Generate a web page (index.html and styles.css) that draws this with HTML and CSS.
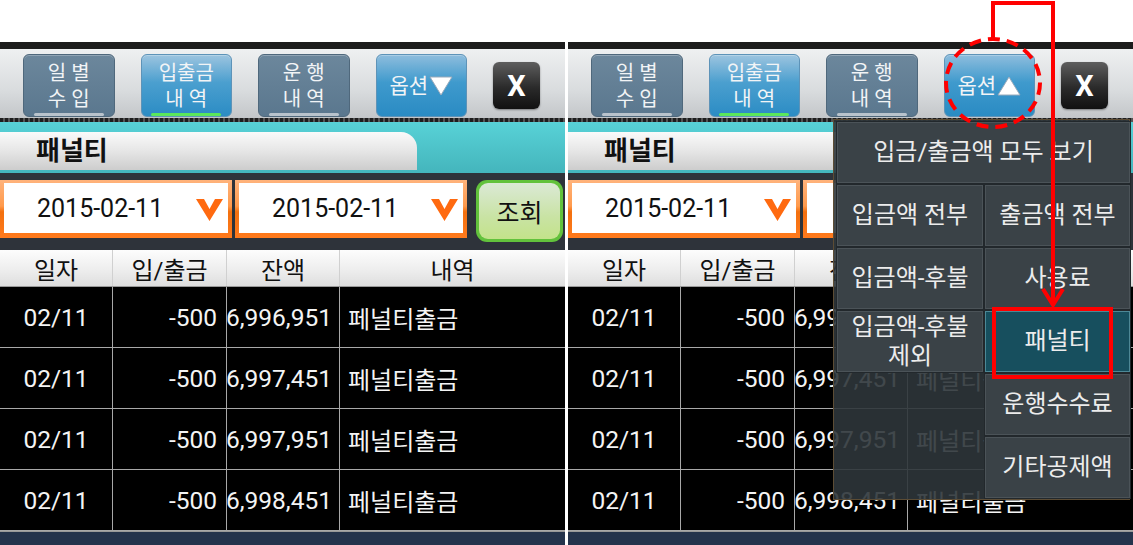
FILE: index.html
```html
<html>
<head>
  <title>패널티 조회 - 옵션 메뉴</title>
  <link rel="stylesheet" href="styles.css">
</head>
<body>
  <div class="screens">

    <!-- Left screen: normal state -->
    <div class="phone">
      <div class="status"></div>
      <div class="toolbar">
        <div class="tb-btn"><span>일 별</span><span>수 입</span><i class="bar"></i></div>
        <div class="tb-btn active"><span>입출금</span><span>내 역</span><i class="bar"></i></div>
        <div class="tb-btn"><span>운 행</span><span>내 역</span><i class="bar"></i></div>
        <div class="tb-btn option"><span>옵션</span><svg width="24" height="20" viewBox="0 0 24 20"><polygon points="1,1 23,1 12,19" fill="#fff" stroke="#9ab" stroke-width="1"/></svg></div>
        <div class="close-btn">X</div>
      </div>
      <div class="dots"></div>
      <div class="tabband"><div class="tab">패널티</div></div>
      <div class="filter">
        <div class="date"><div class="date-in"><span>2015-02-11</span><svg class="chev" width="27" height="22" viewBox="0 0 27 22"><polygon points="0,0 8,0 13.5,10 19,0 27,0 13.5,22" fill="#ff6a10"/></svg></div></div>
        <div class="date"><div class="date-in"><span>2015-02-11</span><svg class="chev" width="27" height="22" viewBox="0 0 27 22"><polygon points="0,0 8,0 13.5,10 19,0 27,0 13.5,22" fill="#ff6a10"/></svg></div></div>
        <div class="search"><div class="search-in">조회</div></div>
      </div>
      <div class="grid head"><div>일자</div><div>입/출금</div><div>잔액</div><div>내역</div></div>
      <div class="grid row"><div>02/11</div><div class="num">-500</div><div class="num">6,996,951</div><div class="desc">페널티출금</div></div>
      <div class="grid row"><div>02/11</div><div class="num">-500</div><div class="num">6,997,451</div><div class="desc">페널티출금</div></div>
      <div class="grid row"><div>02/11</div><div class="num">-500</div><div class="num">6,997,951</div><div class="desc">페널티출금</div></div>
      <div class="grid row"><div>02/11</div><div class="num">-500</div><div class="num">6,998,451</div><div class="desc">페널티출금</div></div>
      <div class="navbar"></div>
    </div>

    <!-- Right screen: option menu opened -->
    <div class="phone">
      <div class="status"></div>
      <div class="toolbar">
        <div class="tb-btn"><span>일 별</span><span>수 입</span><i class="bar"></i></div>
        <div class="tb-btn active"><span>입출금</span><span>내 역</span><i class="bar"></i></div>
        <div class="tb-btn"><span>운 행</span><span>내 역</span><i class="bar"></i></div>
        <div class="tb-btn option"><span>옵션</span><svg width="24" height="20" viewBox="0 0 24 20"><polygon points="12,1 23,19 1,19" fill="#fff" stroke="#9ab" stroke-width="1"/></svg></div>
        <div class="close-btn">X</div>
      </div>
      <div class="dots"></div>
      <div class="tabband"><div class="tab">패널티</div></div>
      <div class="filter">
        <div class="date"><div class="date-in"><span>2015-02-11</span><svg class="chev" width="27" height="22" viewBox="0 0 27 22"><polygon points="0,0 8,0 13.5,10 19,0 27,0 13.5,22" fill="#ff6a10"/></svg></div></div>
        <div class="date"><div class="date-in"><span>2015-02-11</span><svg class="chev" width="27" height="22" viewBox="0 0 27 22"><polygon points="0,0 8,0 13.5,10 19,0 27,0 13.5,22" fill="#ff6a10"/></svg></div></div>
        <div class="search"><div class="search-in">조회</div></div>
      </div>
      <div class="grid head"><div>일자</div><div>입/출금</div><div>잔액</div><div>내역</div></div>
      <div class="grid row"><div>02/11</div><div class="num">-500</div><div class="num">6,996,951</div><div class="desc">페널티출금</div></div>
      <div class="grid row"><div>02/11</div><div class="num">-500</div><div class="num">6,997,451</div><div class="desc">페널티출금</div></div>
      <div class="grid row"><div>02/11</div><div class="num">-500</div><div class="num">6,997,951</div><div class="desc">페널티출금</div></div>
      <div class="grid row"><div>02/11</div><div class="num">-500</div><div class="num">6,998,451</div><div class="desc">페널티출금</div></div>
      <div class="navbar"></div>

      <!-- Option popup menu -->
      <div class="menu">
        <div class="item wide">입금/출금액 모두 보기</div>
        <div class="item">입금액 전부</div>
        <div class="item">출금액 전부</div>
        <div class="item">입금액-후불</div>
        <div class="item">사용료</div>
        <div class="item two">입금액-후불<br>제외</div>
        <div class="item selected">패널티</div>
        <div class="empty"></div>
        <div class="item">운행수수료</div>
        <div class="empty"></div>
        <div class="item">기타공제액</div>
      </div>
    </div>
  </div>

  <!-- Red guide marks drawn over the screenshot -->
  <svg class="marks" width="1133" height="545" viewBox="0 0 1133 545">
    <polyline points="993,38 993,3 1053,3 1053,303" fill="none" stroke="#f00" stroke-width="4"/>
    <polyline points="1043,289 1053,305 1063,289" fill="none" stroke="#f00" stroke-width="4"/>
    <ellipse cx="993" cy="83" rx="47" ry="44" fill="none" stroke="#f00" stroke-width="4" stroke-dasharray="12 7"/>
    <rect x="994" y="309" width="117" height="68" fill="none" stroke="#f00" stroke-width="4"/>
  </svg>
</body>
</html>
```

FILE: styles.css
```css
/* Page */
body {
  margin: 0;
  background: #fff;
  font-family: Roboto, "Noto Sans CJK KR", sans-serif;
  width: 1133px;
  height: 545px;
  overflow: hidden;
  position: relative;
}

/* Two screenshots side by side */
.screens {
  display: flex;
  gap: 3px;
  padding-top: 42px;
}

.phone {
  width: 565px;
  position: relative;
  background: #000;
}

/* Thin status strip */
.status {
  height: 7px;
  background: #1c1c1c;
}

/* Top toolbar */
.toolbar {
  height: 63px;
  padding: 5px 0 1px 23px;
  display: flex;
  align-items: center;
  gap: 26px;
  background: linear-gradient(to bottom, #eef0f1, #d9dcde 60%, #c3c6c9);
}

.tb-btn {
  width: 91.5px;
  height: 63px;
  border: 1px solid #4f687c;
  border-radius: 6px;
  background: linear-gradient(to bottom, #6c879c, #5a778e);
  color: #f2f4f6;
  font-size: 20px;
  line-height: 26px;
  display: flex;
  flex-direction: column;
  align-items: center;
  padding-top: 5px;
  box-sizing: border-box;
  box-shadow: inset 0 1px 0 rgba(255,255,255,0.25);
}

.tb-btn .bar {
  display: block;
  width: 70px;
  height: 3px;
  margin-top: 1px;
  border-radius: 2px;
  background: #b9c3cc;
}

/* Selected toolbar button */
.tb-btn.active {
  background: linear-gradient(to bottom, #9cc4df, #4b9fcf 45%, #2b8cc4);
  border-color: #5d93b8;
}

.tb-btn.active .bar {
  background: #5be85b;
}

/* Option dropdown button */
.tb-btn.option {
  background: linear-gradient(to bottom, #8ebddd, #3f9acd 45%, #2a8bc3);
  border-color: #5d93b8;
  flex-direction: row;
  justify-content: center;
  padding-top: 0;
  gap: 1px;
  font-size: 21px;
}

.close-btn {
  width: 47px;
  height: 47px;
  border-radius: 6px;
  background: linear-gradient(to bottom, #5e5e5e, #2a2a2a 55%, #111);
  color: #fff;
  font-weight: 700;
  font-size: 29px;
  display: flex;
  align-items: center;
  justify-content: center;
  box-shadow: 0 1px 2px rgba(0,0,0,0.4);
}

/* Dotted separator under toolbar */
.dots {
  height: 4px;
  background: repeating-linear-gradient(to right, #1e1e1e 0 3px, #555 3px 5px);
}

/* Teal band with the title tab */
.tabband {
  height: 51px;
  padding-top: 10px;
  box-sizing: border-box;
  background: linear-gradient(to bottom, #58d2d7, #44b5bc);
}

.tab {
  width: 417px;
  height: 38px;
  border-top-right-radius: 16px;
  background: linear-gradient(to bottom, #fafafa, #e6e6e6 50%, #cdcdcd);
  font-size: 26px;
  font-weight: 700;
  color: #111;
  line-height: 38px;
  padding-left: 36px;
  box-sizing: border-box;
}

/* Date filter row */
.filter {
  height: 77px;
  background: #2e333a;
  display: flex;
  padding-top: 7px;
  box-sizing: border-box;
  gap: 3px;
}

.date {
  width: 232px;
  height: 58px;
  padding: 3px 4px 5px 4px;
  box-sizing: border-box;
  background: linear-gradient(to bottom, #ffb37c, #ff9a4c 45%, #f3700f 55%, #ff7a1c);
}

.date-in {
  height: 100%;
  background: #fff;
  display: flex;
  align-items: center;
  justify-content: space-between;
  padding: 0 5px 0 33px;
  font-size: 25px;
  color: #111;
}

.chev {
  margin-top: 4px;
}

.search {
  margin-left: 6px;
  width: 87px;
  height: 62px;
  border-radius: 11px;
  background: #62c23c;
  padding: 3px;
  box-sizing: border-box;
}

.search-in {
  height: 100%;
  border-radius: 9px;
  background: linear-gradient(to bottom, #dbe9d6, #c9e3a4 60%, #c3e38a);
  display: flex;
  align-items: center;
  justify-content: center;
  font-size: 25px;
  color: #111;
}

/* Table */
.grid {
  display: grid;
  grid-template-columns: 113px 114px 113px 1fr;
}

.grid > div {
  border-right: 1px solid #a8a8a8;
  display: flex;
  align-items: center;
  justify-content: center;
}

.grid > div:last-child {
  border-right: none;
}

.head {
  height: 37px;
  background: linear-gradient(to bottom, #fdfdfd, #ececec 60%, #dedede);
  border-bottom: 1px solid #999;
  box-sizing: border-box;
  font-size: 24px;
  color: #111;
}

.head > div {
  border-right-color: #d0d0d0;
}

.row {
  height: 61px;
  border-bottom: 1px solid #a8a8a8;
  box-sizing: border-box;
  color: #f4f4f4;
  font-size: 24.5px;
}

.row > .num {
  justify-content: flex-end;
  padding-right: 9px;
}

.row > .num + .num {
  padding-right: 7px;
}

.row > .desc {
  justify-content: flex-start;
  padding-left: 8px;
  font-size: 24px;
}

.navbar {
  height: 14px;
  border-top: 1px solid #999;
  background: #24334c;
}

/* Option popup */
.menu {
  position: absolute;
  left: 265px;
  top: 77px;
  width: 297px;
  height: 381px;
  box-sizing: border-box;
  padding: 2px 2px 3px 3px;
  border: 1px solid #5c4c34;
  background: rgba(46, 53, 58, 0.9);
  display: grid;
  grid-template-columns: 146px 145px;
  grid-auto-rows: 61px;
  gap: 2px;
}

.menu .item {
  background: #3a4247;
  border: 1px solid #4b5358;
  box-shadow: 0 0 0 1px #22282c;
  display: flex;
  align-items: center;
  justify-content: center;
  text-align: center;
  color: #ececec;
  font-size: 24px;
  line-height: 29px;
}

.menu .wide {
  grid-column: span 2;
}

.menu .selected {
  background: #174f5e;
  border-color: #4d8896;
}

/* Annotation layer */
.marks {
  position: absolute;
  left: 0;
  top: 0;
}
```
